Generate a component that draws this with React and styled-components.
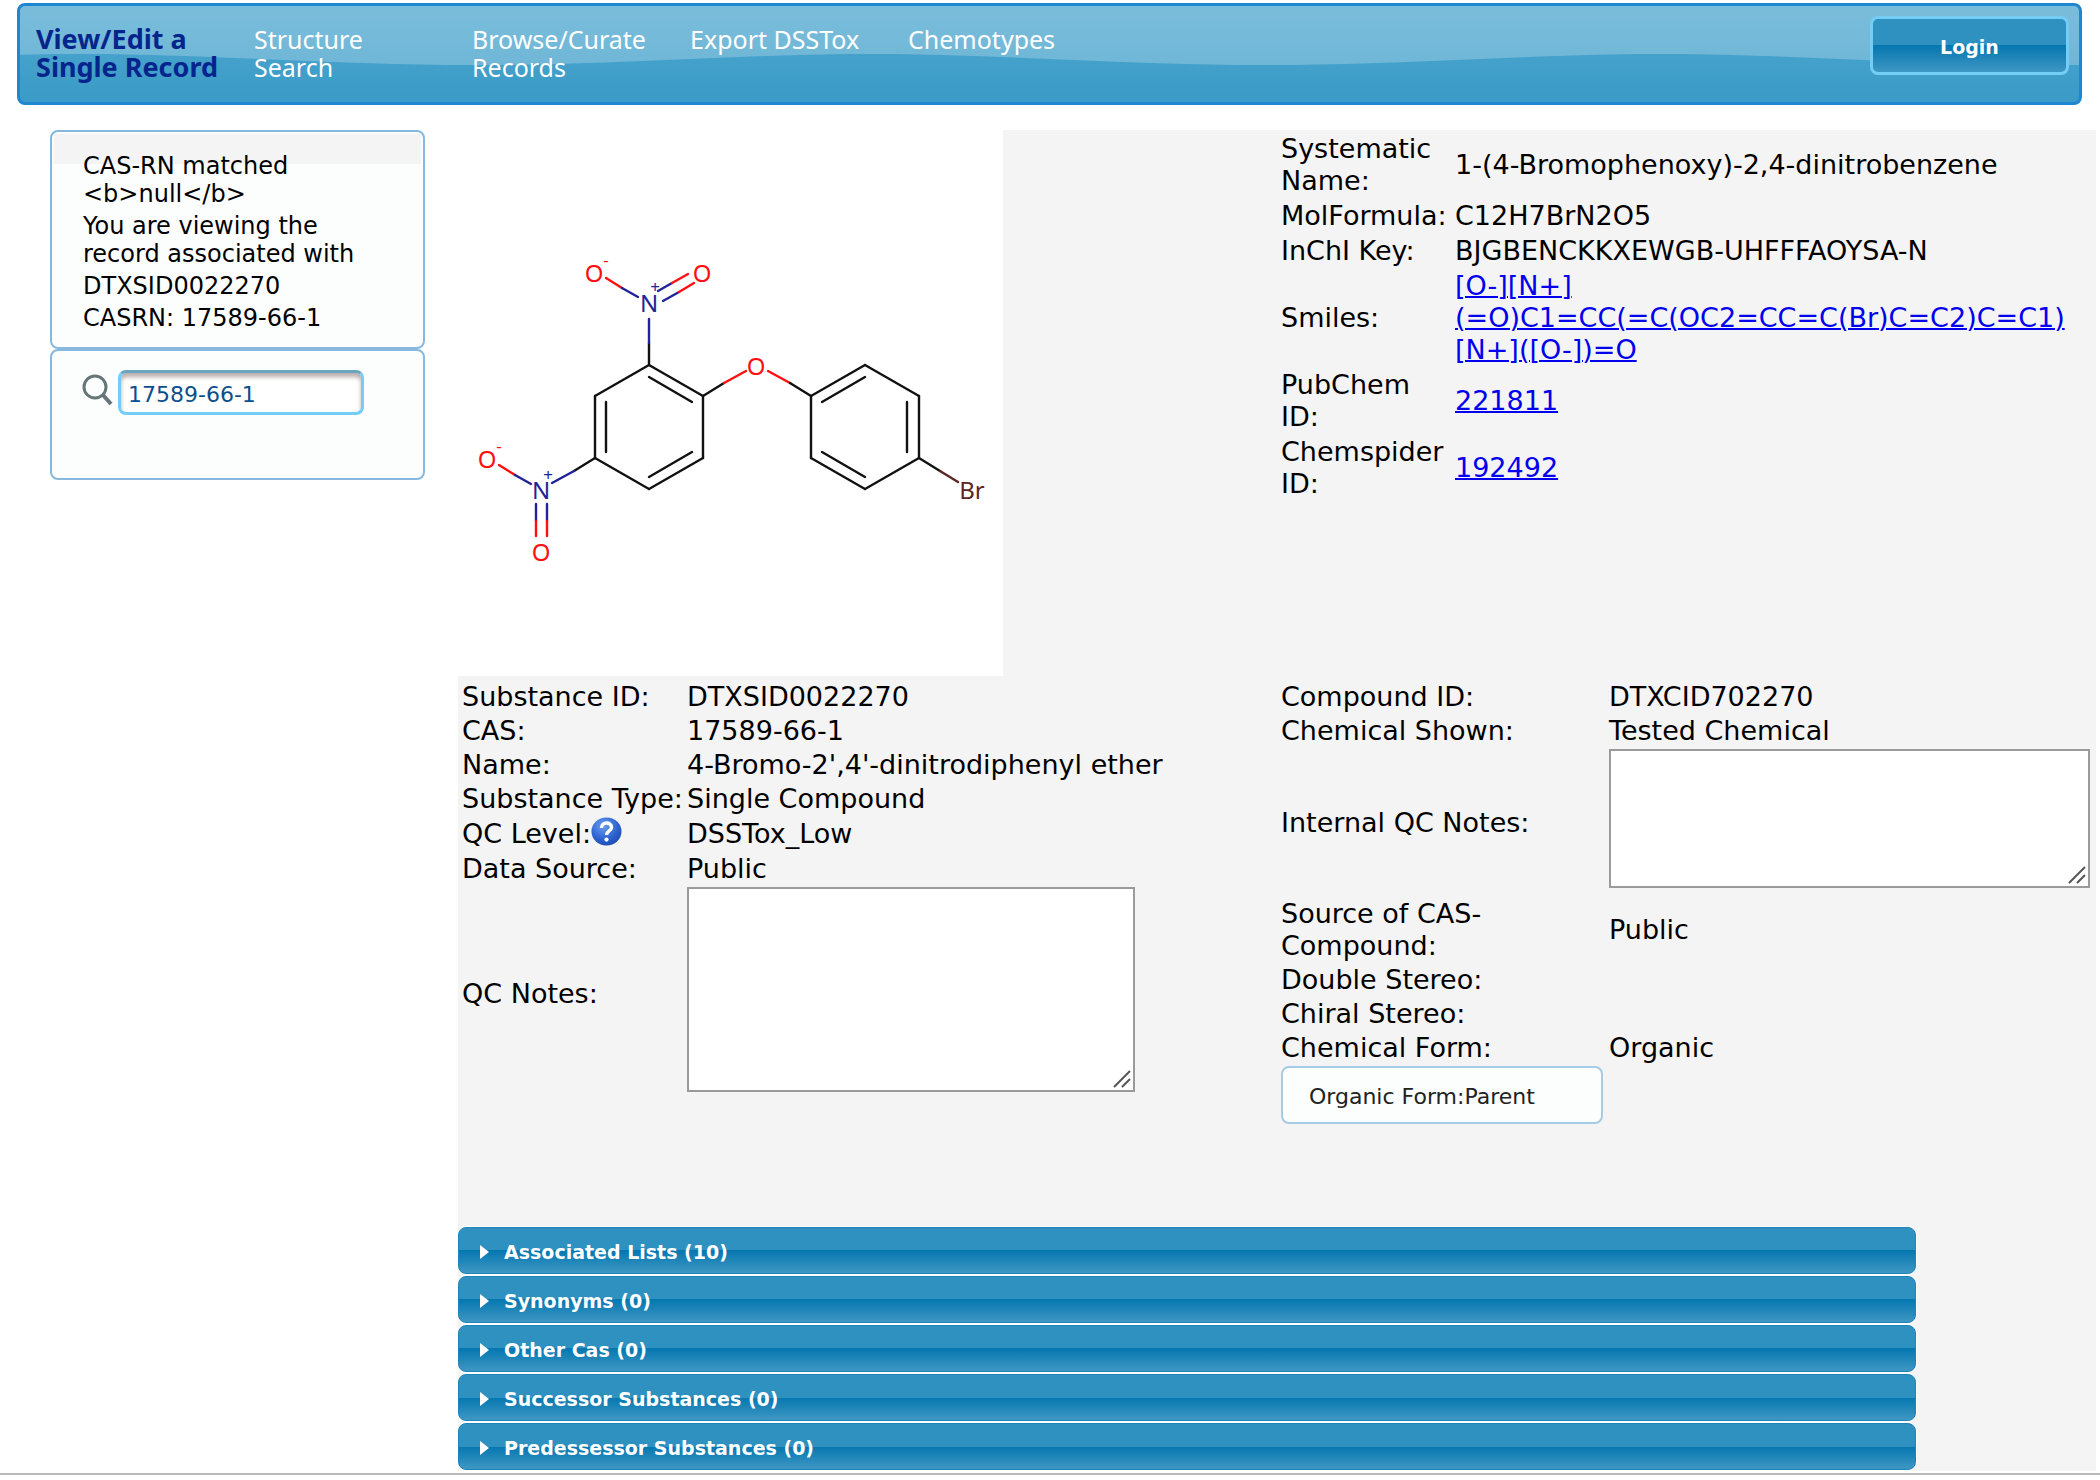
import React, {useState} from 'react'
import styled, { createGlobalStyle } from 'styled-components'

const navItems = ['View/Edit a Single Record', 'Structure Search', 'Browse/Curate Records', 'Export DSSTox', 'Chemotypes']

const sections = ['Associated Lists (10)', 'Synonyms (0)', 'Other Cas (0)', 'Successor Substances (0)', 'Predessessor Substances (0)']

const BLACK = '#111111'
const RED = '#ff1010'
const BLUE = '#22229a'
const BROWN = '#5c2626'

// [x1, y1, x2, y2, colour]
const bonds = [
  // nitro ring
  [191, 235, 245, 266, BLACK], [245, 266, 245, 328, BLACK], [245, 328, 191, 359, BLACK],
  [191, 359, 137, 328, BLACK], [137, 328, 137, 266, BLACK], [137, 266, 191, 235, BLACK],
  [191, 247, 234, 272, BLACK], [148, 272, 148, 322, BLACK], [191, 347, 234, 322, BLACK],
  // bromo ring
  [353, 266, 407, 235, BLACK], [407, 235, 461, 266, BLACK], [461, 266, 461, 328, BLACK],
  [461, 328, 407, 359, BLACK], [407, 359, 353, 328, BLACK], [353, 328, 353, 266, BLACK],
  [364, 272, 407, 247, BLACK], [449, 272, 449, 322, BLACK], [364, 322, 407, 347, BLACK],
  // ether bridge
  [245, 266, 266, 253, BLACK], [266, 253, 288, 241, RED],
  [310, 241, 332, 253, RED], [332, 253, 353, 266, BLACK],
  // upper nitro group
  [191, 235, 191, 213, BLACK], [191, 213, 191, 189, BLUE],
  [148, 148, 164, 158, RED], [164, 158, 180, 167, BLUE],
  [200, 161, 214, 153, BLUE], [214, 153, 230, 144, RED],
  [205, 171, 221, 162, BLUE], [221, 162, 236, 153, RED],
  // lower nitro group
  [137, 328, 116, 341, BLACK], [116, 341, 94, 353, BLUE],
  [41, 335, 57, 345, RED], [57, 345, 73, 354, BLUE],
  [78, 374, 78, 391, BLUE], [78, 391, 78, 406, RED],
  [89, 374, 89, 391, BLUE], [89, 391, 89, 406, RED],
  // bromine
  [461, 328, 482, 341, BLACK], [482, 341, 500, 352, BROWN],
]

// [x, baseline, text, colour]
const atoms = [
  [136, 152, 'O', RED], [244, 152, 'O', RED], [191, 182, 'N', BLUE], [298, 245, 'O', RED],
  [29, 338, 'O', RED], [83, 369, 'N', BLUE], [83, 431, 'O', RED], [514, 369, 'Br', BROWN],
]

const charges = [
  [148, 136, '-', RED], [197, 163, '+', BLUE], [41, 322, '-', RED], [90, 351, '+', BLUE],
]

function Structure() {
  return (
    <StructureBox viewBox='0 0 545 546' role='img' aria-label='1-(4-Bromophenoxy)-2,4-dinitrobenzene'>
      {bonds.map(([x1, y1, x2, y2, color], i) => (
        <line key={i} x1={x1} y1={y1} x2={x2} y2={y2} stroke={color} strokeWidth='2.4' strokeLinecap='round' />
      ))}
      {atoms.map(([x, y, text, color], i) => (
        <text key={i} x={x} y={y} fill={color} fontSize='24' textAnchor='middle'>{text}</text>
      ))}
      {charges.map(([x, y, text, color], i) => (
        <text key={i} x={x} y={y} fill={color} fontSize='17' textAnchor='middle'>{text}</text>
      ))}
    </StructureBox>
  )
}

function HelpIcon() {
  return (
    <svg width='31' height='29' viewBox='0 0 31 29' aria-hidden='true'>
      <defs>
        <radialGradient id='helpFill' cx='0.4' cy='0.3' r='0.8'>
          <stop offset='0' stopColor='#6d9df0' />
          <stop offset='0.6' stopColor='#2c62cf' />
          <stop offset='1' stopColor='#1a46a8' />
        </radialGradient>
      </defs>
      <ellipse cx='15.5' cy='14.5' rx='15' ry='14' fill='url(#helpFill)' />
      <path d='M10.5 11 C10.5 4.5 20.5 4.5 20.5 10.5 C20.5 14 15.5 14 15.5 18' fill='none' stroke='#ffffff' strokeWidth='3.4' />
      <circle cx='15.5' cy='22.6' r='2.1' fill='#ffffff' />
    </svg>
  )
}

function App() {
  const [active, setActive] = useState(0)
  const [casrn, setCasrn] = useState('17589-66-1')

  return (
    <Page>
      <GlobalStyle />
      <Header>
        <Nav>
          {navItems.map((item, i) => (
            <NavLink key={item} href='#' $active={i === active} onClick={() => setActive(i)}>{item}</NavLink>
          ))}
        </Nav>
        <LoginButton type='button'>Login</LoginButton>
      </Header>
      <Content>
        <Sidebar>
          <MessagePanel>
            <p>CAS-RN matched &lt;b&gt;null&lt;/b&gt;</p>
            <p>You are viewing the record associated with</p>
            <p>DTXSID0022270</p>
            <p>CASRN: 17589-66-1</p>
          </MessagePanel>
          <SearchPanel>
            <svg width='32' height='32' viewBox='0 0 32 32' aria-hidden='true'>
              <circle cx='13' cy='13' r='11' fill='none' stroke='#667577' strokeWidth='3' />
              <path d='M21 21 L29 30' stroke='#667577' strokeWidth='4' />
            </svg>
            <SearchInput type='text' aria-label='Search' value={casrn} onChange={(e) => setCasrn(e.target.value)} />
          </SearchPanel>
        </Sidebar>
        <Main>
          <Record>
            <Structure />
            <IdentifierTable>
              <tbody>
                <tr><Label>Systematic Name:</Label><td>1-(4-Bromophenoxy)-2,4-dinitrobenzene</td></tr>
                <tr><Label>MolFormula:</Label><td>C12H7BrN2O5</td></tr>
                <tr><Label>InChI Key:</Label><td>BJGBENCKKXEWGB-UHFFFAOYSA-N</td></tr>
                <tr>
                  <Label>Smiles:</Label>
                  <td><a href='#'>[O-][N+]<br />(=O)C1=CC(=C(OC2=CC=C(Br)C=C2)C=C1)<br />[N+]([O-])=O</a></td>
                </tr>
                <tr><Label>PubChem<br />ID:</Label><td><a href='#'>221811</a></td></tr>
                <tr><Label>Chemspider ID:</Label><td><a href='#'>192492</a></td></tr>
              </tbody>
            </IdentifierTable>
            <SubstanceTable>
              <tbody>
                <tr><Label>Substance ID:</Label><td>DTXSID0022270</td></tr>
                <tr><Label>CAS:</Label><td>17589-66-1</td></tr>
                <tr><Label>Name:</Label><td>4-Bromo-2',4'-dinitrodiphenyl ether</td></tr>
                <tr><Label>Substance Type:</Label><td>Single Compound</td></tr>
                <tr><Label><WithHelp>QC Level:<HelpIcon /></WithHelp></Label><td>DSSTox_Low</td></tr>
                <tr><Label>Data Source:</Label><td>Public</td></tr>
                <tr>
                  <Label><label htmlFor='qcNotes'>QC Notes:</label></Label>
                  <td><Notes id='qcNotes' $width={448} $height={205} /></td>
                </tr>
              </tbody>
            </SubstanceTable>
            <div>
              <CompoundTable>
                <tbody>
                  <tr><Label>Compound ID:</Label><td>DTXCID702270</td></tr>
                  <tr><Label>Chemical Shown:</Label><td>Tested Chemical</td></tr>
                  <tr>
                    <Label><label htmlFor='internalNotes'>Internal QC Notes:</label></Label>
                    <td><Notes id='internalNotes' $width={481} $height={139} /></td>
                  </tr>
                  <tr><Label>Source of CAS-<br />Compound:</Label><td>Public</td></tr>
                  <tr><Label>Double Stereo:</Label><td></td></tr>
                  <tr><Label>Chiral Stereo:</Label><td></td></tr>
                  <tr><Label>Chemical Form:</Label><td>Organic</td></tr>
                </tbody>
              </CompoundTable>
              <FormButton type='button'>Organic Form:Parent</FormButton>
            </div>
          </Record>
          <Accordion>
            {sections.map((title) => (
              <AccordionHeader key={title} type='button'>
                <Arrow viewBox='0 0 9 14' aria-hidden='true'><path d='M0 0 L9 7 L0 14 Z' fill='#ffffff' /></Arrow>
                {title}
              </AccordionHeader>
            ))}
          </Accordion>
        </Main>
      </Content>
    </Page>
  )
}

const GlobalStyle = createGlobalStyle`
    * {
        box-sizing: border-box;
    }

    body {
        margin: 0;
        background-color: #ffffff;
        color: #000000;
        font-family: "DejaVu Sans", Verdana, sans-serif;
        font-size: 27px;
        line-height: 32px;
    }

    button, input, textarea {
        font-family: inherit;
    }
`;

const wave = `url("data:image/svg+xml,%3Csvg xmlns='http://www.w3.org/2000/svg' width='790' height='62' viewBox='0 0 790 62'%3E%3Cpath d='M0 0 H790 V48 C660 48 540 59 395 59 C250 59 130 48 0 48 Z' fill='white' fill-opacity='.24'/%3E%3C/svg%3E")`

const grip = `url("data:image/svg+xml,%3Csvg xmlns='http://www.w3.org/2000/svg' width='18' height='18'%3E%3Cpath d='M1 17 L17 1 M9 17 L17 9' stroke='%23555' stroke-width='2'/%3E%3C/svg%3E")`

const Page = styled.div`
    padding: 3px 4px 0 0;
    border-bottom: 2px solid #bdb7b7;
`;

const Header = styled.header`
    display: flex;
    align-items: flex-start;
    justify-content: space-between;
    min-height: 102px;
    margin: 0 14px 0 17px;
    padding: 10px 10px 10px 16px;
    border: 3px solid #1f87d2;
    border-radius: 8px;
    background: ${wave} 60px 0 / 790px 62px repeat-x, linear-gradient(#50a8d0, #3a9bc6);
`;

const Nav = styled.nav`
    display: flex;
    padding-top: 9px;
`;

const NavLink = styled.a`
    width: 218px;
    padding-right: 32px;
    color: ${(props) => (props.$active ? '#06258c' : '#ffffff')};
    font-size: ${(props) => (props.$active ? '27px' : '25px')};
    font-family: "Noto Sans", sans-serif;
    font-weight: ${(props) => (props.$active ? 'bold' : 'normal')};
    line-height: 28px;
    text-decoration: none;
`;

const glossy = 'linear-gradient(#2e91c0 0 50%, #0577b0 50%, #3f97c3 100%)'

const LoginButton = styled.button`
    width: 199px;
    height: 59px;
    padding-top: 3px;
    border: 3px solid #74cdf4;
    border-radius: 8px;
    background: ${glossy};
    color: #ffffff;
    font-size: 19px;
    font-weight: bold;
`;

const Content = styled.div`
    display: flex;
    align-items: flex-start;
    gap: 33px;
    padding: 25px 0 2px 50px;
`;

const Sidebar = styled.aside`
    flex: 0 0 375px;
`;

const Panel = styled.section`
    border: 2px solid #86b9dd;
    border-radius: 8px;
    background-color: #fcfdfd;
`;

const MessagePanel = styled(Panel)`
    min-height: 219px;
    padding: 20px 60px 10px 31px;
    background: linear-gradient(#f4f4f4, #f4f4f4) 2px 2px / 367px 30px no-repeat #fcfdfd;
    font-size: 24px;
    line-height: 28px;

    p{
        margin: 0 0 4px;
    }
`;

const SearchPanel = styled(Panel)`
    display: flex;
    align-items: flex-start;
    gap: 4px;
    min-height: 131px;
    padding: 19px 30px;

    svg{
        margin-top: 4px;
    }
`;

const SearchInput = styled.input`
    width: 246px;
    height: 45px;
    padding: 4px 7px 0;
    border: 3px solid #74cdf4;
    border-top-color: #6aa5c0;
    border-radius: 8px;
    background-color: #ffffff;
    box-shadow: inset 0 4px 4px #b9adad;
    color: #0b4f8c;
    font-size: 22px;
`;

const Main = styled.main`
    flex: 1;
    background-color: #f4f4f4;
`;

const Record = styled.div`
    display: grid;
    grid-template-columns: 1fr 1fr;
    align-items: start;
`;

const StructureBox = styled.svg`
    width: 545px;
    height: 546px;
    background-color: #ffffff;
    font-family: "Noto Sans", sans-serif;
`;

const Label = styled.th`
    font-weight: normal;
    text-align: left;
`;

const FieldTable = styled.table`
    border-spacing: 0;
    margin: 2px;

    th, td{
        height: 34px;
        padding: 1px 2px;
    }

    a{
        color: #0000ee;
        text-decoration-thickness: 2px;
    }
`;

const IdentifierTable = styled(FieldTable)`
    th{
        width: 174px;
        padding-right: 0;
        padding-bottom: 2px;
    }

    td{
        padding-bottom: 2px;
    }
`;

const SubstanceTable = styled(FieldTable)`
    margin-top: 4px;

    th{
        width: 225px;
        padding-right: 0;
        white-space: nowrap;
    }
`;

const CompoundTable = styled(FieldTable)`
    margin-top: 4px;
    margin-bottom: 0;

    th{
        width: 328px;
    }
`;

const WithHelp = styled.span`
    display: flex;
    align-items: center;
    height: 34px;

    svg{
        margin-bottom: 5px;
    }
`;

const Notes = styled.textarea`
    display: block;
    width: ${(props) => props.$width}px;
    height: ${(props) => props.$height}px;
    margin-bottom: 8px;
    border: 2px solid #9a9a9a;
    border-radius: 0;
    background: ${grip} right 2px bottom 2px no-repeat #ffffff;
    font-size: 22px;
    resize: none;
`;

const FormButton = styled.button`
    width: 322px;
    height: 58px;
    margin: 1px 4px 2px;
    padding: 2px 26px 0;
    border: 2px solid #a6cbe5;
    border-radius: 8px;
    background-color: #fcfdfd;
    color: #222222;
    font-size: 22px;
    text-align: left;
`;

const Accordion = styled.div`
    display: flex;
    flex-direction: column;
    gap: 2px;
    width: 89%;
    padding-top: 101px;
    padding-bottom: 1px;
`;

const AccordionHeader = styled.button`
    display: flex;
    align-items: center;
    gap: 15px;
    height: 47px;
    padding: 2px 21px 0;
    border: 1px solid #1f85b8;
    border-radius: 8px;
    background: ${glossy};
    box-shadow: 0 0 0 1px #ffffff;
    color: #ffffff;
    font-size: 19px;
    font-weight: bold;
    text-align: left;
`;

const Arrow = styled.svg`
    width: 9px;
    height: 14px;
`;

export default App
